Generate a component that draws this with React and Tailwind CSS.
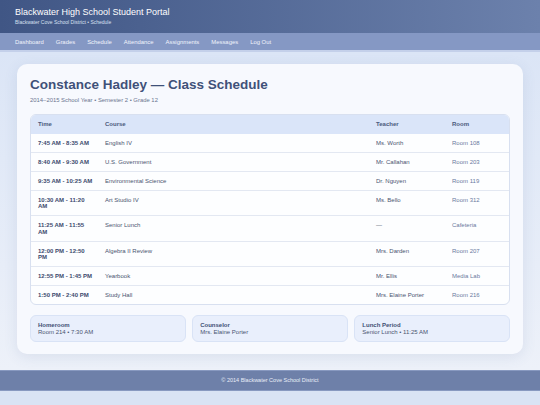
import React from 'react';

const navLinks = ['Dashboard', 'Grades', 'Schedule', 'Attendance', 'Assignments', 'Messages', 'Log Out'];

const schedule = [
  { time: '7:45 AM - 8:35 AM', course: 'English IV', teacher: 'Ms. Worth', room: 'Room 108' },
  { time: '8:40 AM - 9:30 AM', course: 'U.S. Government', teacher: 'Mr. Callahan', room: 'Room 203' },
  { time: '9:35 AM - 10:25 AM', course: 'Environmental Science', teacher: 'Dr. Nguyen', room: 'Room 119' },
  { time: '10:30 AM - 11:20 AM', course: 'Art Studio IV', teacher: 'Ms. Bello', room: 'Room 312' },
  { time: '11:25 AM - 11:55 AM', course: 'Senior Lunch', teacher: '—', room: 'Cafeteria' },
  { time: '12:00 PM - 12:50 PM', course: 'Algebra II Review', teacher: 'Mrs. Darden', room: 'Room 207' },
  { time: '12:55 PM - 1:45 PM', course: 'Yearbook', teacher: 'Mr. Ellis', room: 'Media Lab' },
  { time: '1:50 PM - 2:40 PM', course: 'Study Hall', teacher: 'Mrs. Elaine Porter', room: 'Room 216' },
];

const infoCards = [
  { label: 'Homeroom', value: 'Room 214 • 7:30 AM' },
  { label: 'Counselor', value: 'Mrs. Elaine Porter' },
  { label: 'Lunch Period', value: 'Senior Lunch • 11:25 AM' },
];

export default function App() {
  return (
    <div className="min-h-screen bg-[#d9e3f4] font-['Liberation_Sans',Arial,sans-serif]">
      {/* top banner */}
      <header className="h-[33px] bg-gradient-to-r from-[#405685] to-[#6c81ac] px-[15px] pt-[7px]">
        <h1 className="text-[9px] leading-[11px] text-white">Blackwater High School Student Portal</h1>
        <p className="mt-[1px] text-[5px] leading-[7px] text-[#d8e0f1]">Blackwater Cove School District • Schedule</p>
      </header>
      <nav className="flex h-[19px] items-center gap-[12px] border-b-2 border-[#c4d0ea] bg-[#8598c4] px-[15px] pt-[1px]">
        {navLinks.map((l) => (
          <a key={l} className="text-[5.9px] leading-[7px] text-[#f1f4fc]">{l}</a>
        ))}
      </nav>

      <main className="bg-gradient-to-b from-[#dbe5f6] to-[#edf1f9] px-[17px] pb-[16px] pt-[12px]">
        <div className="rounded-[10px] bg-[#f7f9fe] px-[13px] pb-[12px] pt-[13px] shadow-[0_3px_14px_rgba(70,95,150,0.12)]">
          <h2 className="text-[13.5px] font-bold leading-[16px] text-[#3f5179]">Constance Hadley — Class Schedule</h2>
          <p className="mt-[2.5px] text-[5.9px] leading-[8px] text-[#6b7590]">2014–2015 School Year • Semester 2 • Grade 12</p>

          <div className="mt-[10px] overflow-hidden rounded-[6px] border border-[#d8e0f0] bg-[#fdfeff]">
            <table className="w-full table-fixed border-collapse text-left text-[6px]">
              <thead>
                <tr className="bg-[#dae5f9] text-[#4b5a7c]">
                  <th className="w-[67px] py-[6px] pl-[7px] pr-[4px] font-bold leading-[7px]">Time</th>
                  <th className="py-[6px] pl-[7px] font-bold leading-[7px]">Course</th>
                  <th className="w-[76px] py-[6px] pl-[7px] font-bold leading-[7px]">Teacher</th>
                  <th className="w-[64px] py-[6px] pl-[7px] font-bold leading-[7px]">Room</th>
                </tr>
              </thead>
              <tbody>
                {schedule.map((r, i) => (
                  <tr key={r.time} className={i < schedule.length - 1 ? 'border-b border-[#e3e8f2]' : ''}>
                    <td className="pb-[5.5px] pl-[7px] pr-[4px] pt-[6px] align-top font-bold leading-[6.5px] text-[#3c4a6e]">{r.time}</td>
                    <td className="pb-[5.5px] pl-[7px] pt-[6px] align-top leading-[6.5px] text-[#4a5470]">{r.course}</td>
                    <td className="pb-[5.5px] pl-[7px] pt-[6px] align-top leading-[6.5px] text-[#4a5470]">{r.teacher}</td>
                    <td className="pb-[5.5px] pl-[7px] pt-[6px] align-top leading-[6.5px] text-[#6a7aa0]">{r.room}</td>
                  </tr>
                ))}
              </tbody>
            </table>
          </div>

          <div className="mt-[10px] grid grid-cols-3 gap-[6.5px]">
            {infoCards.map((c) => (
              <div key={c.label} className="rounded-[6px] border border-[#d9e3f6] bg-[#e9effc] px-[7px] py-[5.5px]">
                <div className="text-[6px] font-bold leading-[7px] text-[#3f4f75]">{c.label}</div>
                <div className="text-[6px] leading-[7px] text-[#4a5470]">{c.value}</div>
              </div>
            ))}
          </div>
        </div>
      </main>

      <footer className="flex h-[21px] items-center justify-center border-y border-[#8899c0] bg-[#6e80a9] text-[5.5px] text-[#e9eef8]">
        © 2014 Blackwater Cove School District
      </footer>
    </div>
  );
}
